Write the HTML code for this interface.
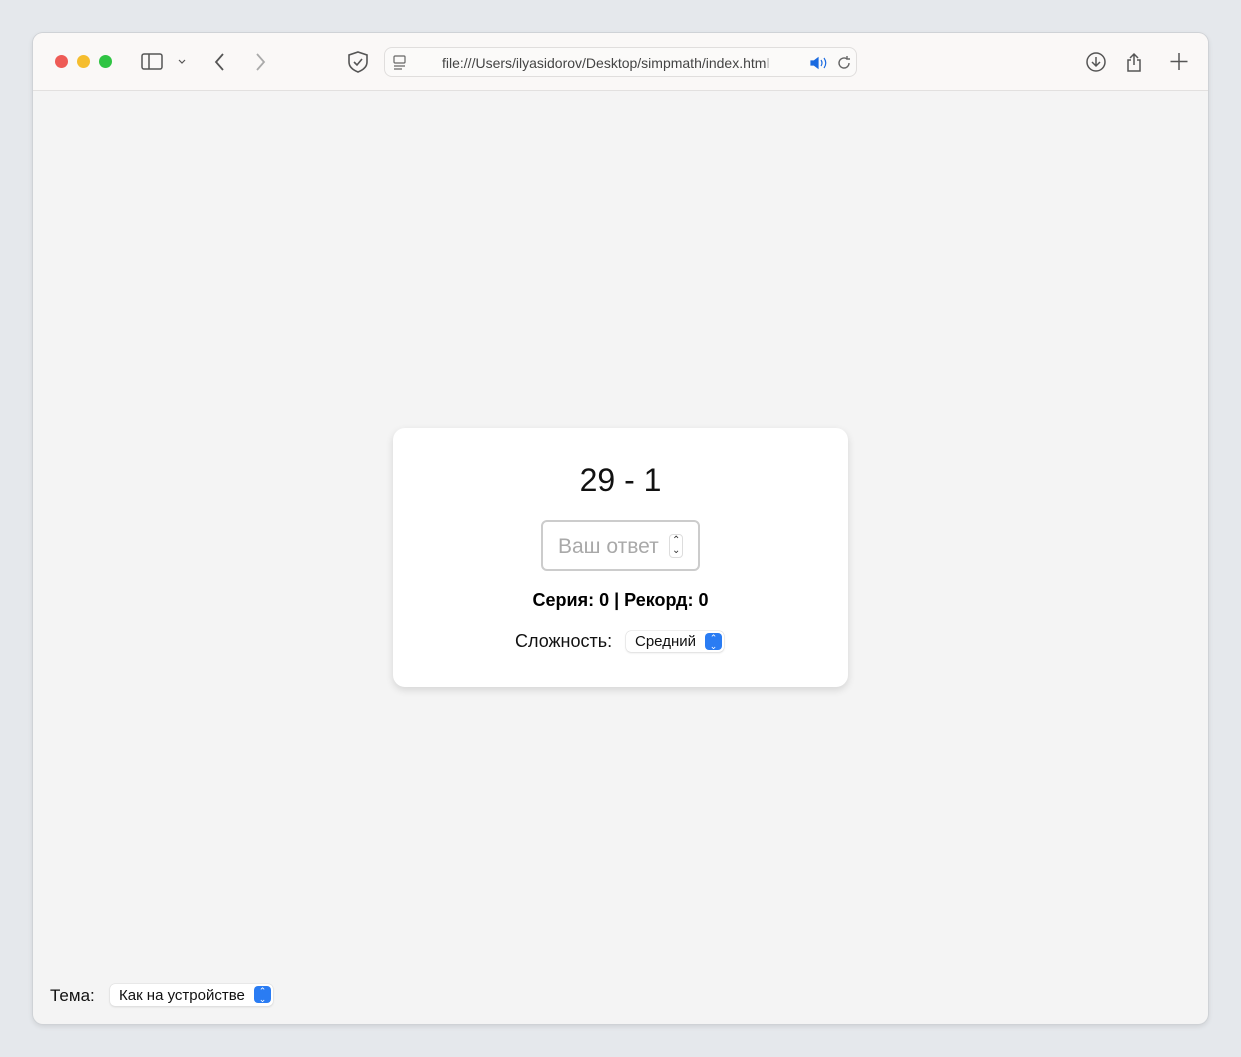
<!DOCTYPE html>
<html><head><meta charset="utf-8"><style>
*{box-sizing:border-box;margin:0;padding:0}
body{width:1241px;height:1057px;background:#e5e8ec;font-family:"Liberation Sans",sans-serif;position:relative;overflow:hidden}
.win{position:absolute;left:33px;top:33px;width:1175px;height:991px;border-radius:10px;background:#f4f4f4;overflow:hidden;box-shadow:0 0 0 1px #cfd2d6,0 2px 6px rgba(0,0,0,.12)}
.bar{position:absolute;left:0;top:0;width:100%;height:58px;background:#faf8f7;border-bottom:1px solid #e2e0df}
.dot{position:absolute;top:22px;width:13px;height:13px;border-radius:50%}
.url{position:absolute;left:351px;top:14px;width:473px;height:30px;border:1px solid #e0dedd;border-radius:8px;background:#fbfaf9}
.url span{position:absolute;left:57px;top:7px;font-size:14px;color:#444}
.card{position:absolute;left:360px;top:395px;width:455px;height:259px;background:#fff;border-radius:12px;box-shadow:0 3px 8px rgba(0,0,0,.13)}
.t{position:absolute;width:100%;text-align:center}
.sel{position:absolute;background:#fff;border-radius:5px;box-shadow:0 0 0 .5px #ddd,0 1px 2px rgba(0,0,0,.12);font-size:15px;color:#111}
.arr{position:absolute;right:2px;top:2px;width:17px;height:17px;border-radius:4px;background:#2a7cf3;color:#fff;font-size:9px;line-height:8px;text-align:center;padding-top:1px}
</style></head><body>
<div class="win">
<div class="bar">
<div class="dot" style="left:22px;background:#ee5b56"></div>
<div class="dot" style="left:44px;background:#f5bd2e"></div>
<div class="dot" style="left:66px;background:#2fc443"></div>
<svg style="position:absolute;left:108px;top:19px" width="60" height="20" fill="none" stroke="#555" stroke-width="1.5"><rect x="1" y="2" width="20" height="15" rx="2"/><line x1="8" y1="2" x2="8" y2="17"/><path d="M38 8l3 3 3-3" stroke-width="1.2"/></svg>
<svg style="position:absolute;left:178px;top:18px" width="60" height="22" fill="none" stroke="#555" stroke-width="1.8"><path d="M12 3l-7 8 7 8"/><path d="M46 3l7 8-7 8" stroke="#aaa"/></svg>
<svg style="position:absolute;left:313px;top:17px" width="24" height="24" fill="none" stroke="#555" stroke-width="1.6"><path d="M12 2l9 3v7c0 5-4 8-9 10-5-2-9-5-9-10V5z"/><path d="M8 12l3 3 5-6"/></svg>
<div class="url"><svg style="position:absolute;left:8px;top:7px" width="14" height="16" fill="none" stroke="#666" stroke-width="1.2"><rect x="1" y="1" width="11" height="7" rx="1"/><line x1="1" y1="11" x2="12" y2="11"/><line x1="1" y1="14" x2="9" y2="14"/></svg><span>file:///Users/ilyasidorov/Desktop/simpmath/index.htm<span style="color:#bbb;position:static">l</span></span>
<svg style="position:absolute;left:424px;top:7px" width="20" height="16" fill="#1a6ae0" stroke="#1a6ae0" stroke-width="1.2"><path d="M2 6h3l4-3v10l-4-3H2z"/><path d="M12 5q2 3 0 6M15 3q3.5 5 0 10" fill="none"/></svg>
<svg style="position:absolute;left:451px;top:7px" width="16" height="16" fill="none" stroke="#666" stroke-width="1.4"><path d="M13 8a5 5 0 1 1-2-4"/><path d="M11 1v3h3"/></svg></div>
<svg style="position:absolute;left:1052px;top:17px" width="110" height="24" fill="none" stroke="#555" stroke-width="1.5"><circle cx="11" cy="12" r="9"/><path d="M11 7v9M7 12l4 4 4-4"/><path d="M49 4v11M45 8l4-4 4 4M46 10h-3v11h12V10h-3"/><path d="M94 3v17M85.5 11.5h17"/></svg>
</div>
<div class="card">
<div class="t" style="top:34px;font-size:32px;color:#111">29 - 1</div>
<div style="position:absolute;left:148px;top:92px;width:159px;height:51px;border:2px solid #ccc;border-radius:6px">
<span style="position:absolute;left:15px;top:13px;font-size:21px;color:#a9a9a9">Ваш ответ</span>
<span style="position:absolute;left:126px;top:12px;font-size:10px;line-height:10px;color:#333;border:1px solid #ddd;border-radius:4px;padding:1px 2px">⌃<br>⌄</span></div>
<div class="t" style="top:162px;font-size:18px;font-weight:bold;color:#000">Серия: 0 | Рекорд: 0</div>
<div style="position:absolute;left:122px;top:203px;font-size:18px;color:#111">Сложность:</div>
<div class="sel" style="left:233px;top:203px;width:98px;height:21px"><span style="position:absolute;left:9px;top:2px">Средний</span><div class="arr">⌃<br>⌄</div></div>
</div>
<div style="position:absolute;left:17px;top:953px;font-size:17px;color:#111">Тема:</div>
<div class="sel" style="left:77px;top:951px;width:163px;height:22px"><span style="position:absolute;left:9px;top:3px">Как на устройстве</span><div class="arr">⌃<br>⌄</div></div>
</div>
</body></html>
